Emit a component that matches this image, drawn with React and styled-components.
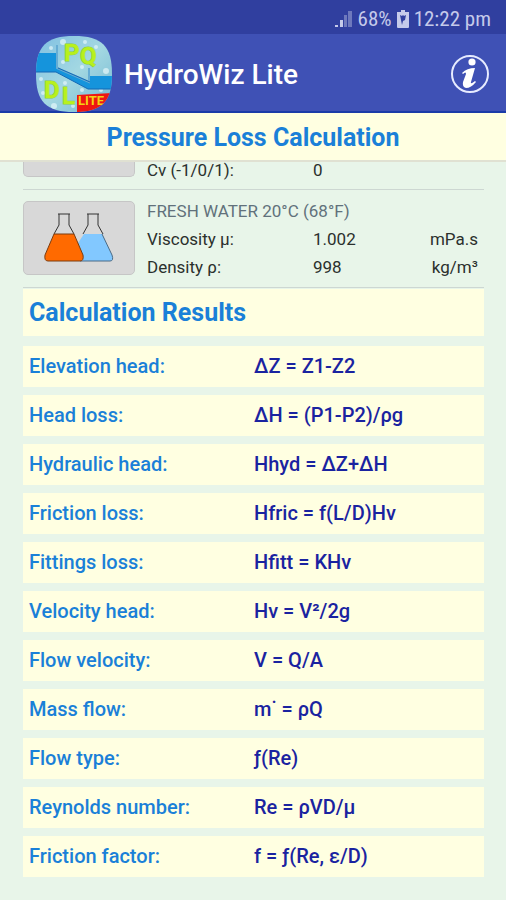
import React from "react";
import styled, { createGlobalStyle } from "styled-components";

const GlobalStyle = createGlobalStyle`
  * { box-sizing: border-box; }
  body {
    margin: 0;
    background: #e8f5e9;
    font-family: Roboto, "Noto Sans", sans-serif;
  }
`;

const Page = styled.div`
  min-height: 100vh;
  display: flex;
  flex-direction: column;
`;

const StatusBar = styled.div`
  display: flex;
  align-items: center;
  justify-content: flex-end;
  gap: 5px;
  height: 34px;
  padding: 4px 15px 0 0;
  background: #303f9f;
  color: #c5caea;
  font-family: "Roboto Condensed", Roboto, sans-serif;
  font-size: 21px;
  line-height: 24px;
`;

const AppBar = styled.header`
  display: flex;
  align-items: center;
  height: 79px;
  padding: 2px 16px 0 36px;
  background: #3f51b5;
  border-bottom: 2px solid #1a3ba8;
`;

const AppName = styled.h1`
  flex: 1;
  margin: 0;
  padding: 2px 0 0 12px;
  color: #fff;
  font-size: 28px;
  font-weight: 500;
  line-height: 36px;
`;

const IconButton = styled.button`
  display: flex;
  padding: 0;
  border: 0;
  background: none;
  cursor: pointer;
`;

const ScreenTitle = styled.h2`
  margin: 0;
  padding: 7px 0 5px;
  background: #ffffe1;
  border-bottom: 2px solid #e0e1d2;
  color: #1a80d8;
  font-size: 25px;
  font-weight: 700;
  line-height: 35px;
  text-align: center;
`;

const Content = styled.main`
  padding: 0 22px 22px 23px;
`;

const InputRow = styled.section`
  display: flex;
  align-items: flex-end;
  gap: 12px;
  height: ${(p) => (p.$partial ? "28px" : "98px")};
  padding-bottom: 12px;
  border-bottom: 1px solid #cdd7d2;
`;

const TileButton = styled.button`
  flex: none;
  display: flex;
  align-items: center;
  justify-content: center;
  width: 112px;
  height: ${(p) => (p.$partial ? "15px" : "74px")};
  padding: 0;
  border: 1px solid #c6c6c6;
  border-top-width: ${(p) => (p.$partial ? "0" : "1px")};
  border-radius: ${(p) => (p.$partial ? "0 0 5px 5px" : "5px")};
  background: #d8d8d8;
  cursor: pointer;
`;

const Facts = styled.div`
  flex: 1;
  align-self: flex-start;
  padding-top: ${(p) => (p.$padded ? "7px" : "0")};
`;

const FluidName = styled.div`
  color: #61717b;
  font-size: 17px;
  line-height: 28px;
`;

const Fact = styled.div`
  display: grid;
  grid-template-columns: 166px 1fr auto;
  padding-right: 6px;
  color: #2b302d;
  font-size: 17px;
  line-height: ${(p) => (p.$tight ? "16px" : "28px")};
`;

const ResultsTitle = styled.h3`
  margin: 1px 0 10px;
  padding: 6px;
  background: #ffffe1;
  color: #1a80d8;
  font-size: 25px;
  font-weight: 700;
  line-height: 35px;
`;

const Results = styled.dl`
  display: flex;
  flex-direction: column;
  gap: 8px;
  margin: 0;
`;

const Result = styled.div`
  display: grid;
  grid-template-columns: 225px 1fr;
  padding: 0 6px;
  background: #ffffe1;
  font-size: 20px;
  font-weight: 500;
  line-height: 41px;
`;

const Label = styled.dt`
  color: #1a80d8;
`;

const Formula = styled.dd`
  margin: 0;
  color: #1a23a0;
`;

const results = [
  ["Elevation head:", "ΔZ = Z1-Z2"],
  ["Head loss:", "ΔH = (P1-P2)/ρg"],
  ["Hydraulic head:", "Hhyd = ΔZ+ΔH"],
  ["Friction loss:", "Hfric = f(L/D)Hv"],
  ["Fittings loss:", "Hfitt = KHv"],
  ["Velocity head:", "Hv = V²/2g"],
  ["Flow velocity:", "V = Q/A"],
  ["Mass flow:", "m˙ = ρQ"],
  ["Flow type:", "ƒ(Re)"],
  ["Reynolds number:", "Re = ρVD/μ"],
  ["Friction factor:", "f = ƒ(Re, ε/D)"],
];

function Signal() {
  return (
    <svg width="18" height="18" viewBox="0 0 18 18" aria-hidden="true">
      <rect x="0" y="15" width="3" height="2" fill="#c5caea" />
      <rect x="5" y="10" width="3" height="7" fill="#c5caea" />
      <rect x="9" y="5" width="3" height="12" fill="#6e79bd" />
      <rect x="13" y="1" width="4" height="16" fill="#6e79bd" />
    </svg>
  );
}

function Battery() {
  return (
    <svg width="12" height="18" viewBox="0 0 12 18" aria-hidden="true">
      <path d="M4 0h4v2h4v15q0 1-1 1H1q-1 0-1-1V2h4z" fill="#c5caea" />
      <path d="M3 5l2 1 1-1 1 1 2-1-1 5-2 1-1 4-1-5z" fill="#303f9f" />
    </svg>
  );
}

function Logo() {
  return (
    <svg width="76" height="76" viewBox="0 0 76 76" aria-hidden="true">
      <defs>
        <clipPath id="squircle">
          <path d="M38 0C66 0 76 10 76 38S66 76 38 76 0 66 0 38 10 0 38 0z" />
        </clipPath>
        <linearGradient id="water" x1="0" y1="0" x2="1" y2="1">
          <stop offset="0" stopColor="#7fbfe2" />
          <stop offset=".5" stopColor="#a4d8e2" />
          <stop offset="1" stopColor="#74b8d2" />
        </linearGradient>
      </defs>
      <g clipPath="url(#squircle)">
        <rect width="76" height="76" fill="url(#water)" />
        <g fill="#dff4f8" opacity=".75">
          <circle cx="27" cy="6" r="3" /><circle cx="49" cy="6" r="2" />
          <circle cx="15" cy="12" r="2" /><circle cx="60" cy="11" r="2" />
          <circle cx="70" cy="35" r="3" /><circle cx="27" cy="26" r="2" />
          <circle cx="46" cy="31" r="2" /><circle cx="5" cy="43" r="2" />
          <circle cx="7" cy="57" r="2" /><circle cx="29" cy="47" r="2" />
          <circle cx="46" cy="54" r="2" /><circle cx="65" cy="54" r="2" />
          <circle cx="18" cy="70" r="3" /><circle cx="37" cy="70" r="2" />
        </g>
        <path d="M0 17H21V32L54 47V40H76V53H52L20 36H0z" fill="#1594dc" />
        <path d="M21 9V32L53 46V32" fill="none" stroke="#66add4" strokeWidth="2" />
        <path d="M0 36H20L52 53H76M22 32L54 46" fill="none" stroke="#1569b5" strokeWidth="1" />
        <path d="M41 59l35-2v19H41z" fill="#ee1712" />
        <g fill="#b8f01d" stroke="#8ccf3a" strokeWidth="1" paintOrder="stroke" fontFamily="Roboto, sans-serif" fontWeight="700">
          <text x="28" y="25" fontSize="24">P</text>
          <text x="44" y="28" fontSize="24">Q</text>
          <text x="8" y="62" fontSize="24">D</text>
          <text x="26" y="68" fontSize="24">L</text>
        </g>
        <text x="42" y="69" fontSize="13" fontWeight="700" fill="#f4d313" fontFamily="Roboto, sans-serif">LITE</text>
      </g>
    </svg>
  );
}

function InfoIcon() {
  return (
    <svg width="40" height="40" viewBox="0 0 40 40" aria-hidden="true">
      <circle cx="20" cy="20" r="18" fill="none" stroke="#e6ebff" strokeWidth="2" />
      <circle cx="22" cy="8" r="3.6" fill="#fff" />
      <path d="M12 19Q17 14 25 14L21 28Q20 31 25 27L26 28Q21 34 16 34Q12 33 13 28L16 20Q16 17 13 20z" fill="#fff" />
    </svg>
  );
}

function Flasks() {
  return (
    <svg width="70" height="50" viewBox="0 0 70 50" aria-hidden="true">
      <g strokeWidth="1" strokeLinejoin="round">
        <path d="M40 21H58L68 42Q70 48 66 48H34V30z" fill="#82c8ff" />
        <path d="M58 21L68 42Q70 48 66 48H36" fill="none" stroke="#4b6b85" />
        <path d="M43 1H55M44 1V12L39 21M54 1V12L59 21" fill="none" stroke="#333" />
        <path d="M14 1H26M15 1V12L10 21M25 1V12L30 21" fill="none" stroke="#333" />
        <path d="M10 21H30L39 42Q40 48 36 48H4Q0 48 1 42z" fill="#ff6a00" stroke="#7b3c10" />
      </g>
    </svg>
  );
}

export default function App() {
  return (
    <Page>
      <GlobalStyle />
      <StatusBar>
        <Signal />
        <span>68%</span>
        <Battery />
        <span>12:22 pm</span>
      </StatusBar>
      <AppBar>
        <Logo />
        <AppName>HydroWiz Lite</AppName>
        <IconButton aria-label="Information"><InfoIcon /></IconButton>
      </AppBar>
      <ScreenTitle>Pressure Loss Calculation</ScreenTitle>
      <Content>
        <InputRow $partial>
          <TileButton $partial aria-label="Fittings" />
          <Facts>
            <Fact $tight><span>Cv (-1/0/1):</span><span>0</span></Fact>
          </Facts>
        </InputRow>
        <InputRow>
          <TileButton aria-label="Fluid"><Flasks /></TileButton>
          <Facts $padded>
            <FluidName>FRESH WATER 20°C (68°F)</FluidName>
            <Fact><span>Viscosity μ:</span><span>1.002</span><span>mPa.s</span></Fact>
            <Fact><span>Density ρ:</span><span>998</span><span>kg/m³</span></Fact>
          </Facts>
        </InputRow>
        <ResultsTitle>Calculation Results</ResultsTitle>
        <Results>
          {results.map(([label, formula]) => (
            <Result key={label}>
              <Label>{label}</Label>
              <Formula>{formula}</Formula>
            </Result>
          ))}
        </Results>
      </Content>
    </Page>
  );
}
